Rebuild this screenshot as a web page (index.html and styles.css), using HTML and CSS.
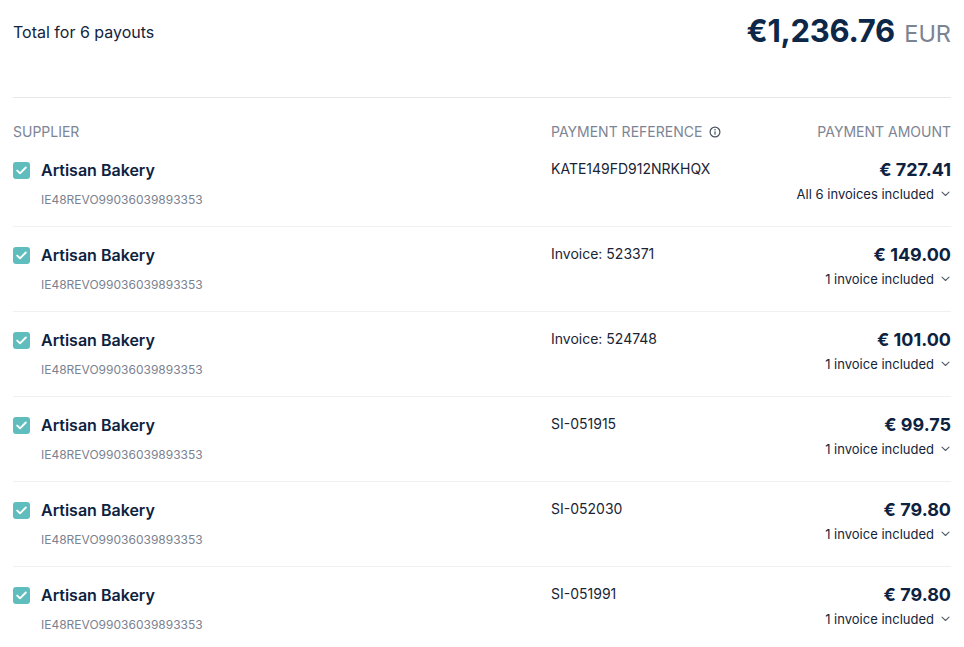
FILE: index.html
```html
<!DOCTYPE html>
<html>
<head>
<meta charset="utf-8">
<link rel="stylesheet" href="styles.css">
</head>
<body>
<div class="page">
  <div class="summary">
    <div class="summary-label">Total for 6 payouts</div>
    <div class="summary-total"><span class="total-amount">€1,236.76</span> <span class="total-cur">EUR</span></div>
  </div>
  <div class="table">
    <div class="thead">
      <div class="col-supplier">SUPPLIER</div>
      <div class="col-ref">PAYMENT REFERENCE
        <svg class="info" width="12" height="12" viewBox="0 0 12 12"><circle cx="6" cy="6" r="4.9" fill="none" stroke="#4a5260" stroke-width="1.2"/><circle cx="6" cy="3.7" r="0.8" fill="#4a5260"/><rect x="5.4" y="5.2" width="1.2" height="3.6" rx="0.5" fill="#4a5260"/></svg>
      </div>
      <div class="col-amount">PAYMENT AMOUNT</div>
    </div>

    <div class="row">
      <div class="col-supplier">
        <div class="name-line"><span class="check"><svg width="11" height="9" viewBox="0 0 11 9"><path d="M1.2 4.6 L4 7.3 L9.8 1.5" fill="none" stroke="#fff" stroke-width="1.9" stroke-linecap="round" stroke-linejoin="round"/></svg></span><span class="name">Artisan Bakery</span></div>
        <div class="iban">IE48REVO99036039893353</div>
      </div>
      <div class="col-ref ref">KATE149FD912NRKHQX</div>
      <div class="col-amount">
        <div class="amount">€ 727.41</div>
        <div class="included">All 6 invoices included <svg class="chev" width="9" height="6" viewBox="0 0 9 6"><path d="M1 1.2 L4.5 4.5 L8 1.2" fill="none" stroke="#555d6b" stroke-width="1.1" stroke-linecap="round" stroke-linejoin="round"/></svg></div>
      </div>
    </div>

    <div class="row">
      <div class="col-supplier">
        <div class="name-line"><span class="check"><svg width="11" height="9" viewBox="0 0 11 9"><path d="M1.2 4.6 L4 7.3 L9.8 1.5" fill="none" stroke="#fff" stroke-width="1.9" stroke-linecap="round" stroke-linejoin="round"/></svg></span><span class="name">Artisan Bakery</span></div>
        <div class="iban">IE48REVO99036039893353</div>
      </div>
      <div class="col-ref ref">Invoice: 523371</div>
      <div class="col-amount">
        <div class="amount">€ 149.00</div>
        <div class="included">1 invoice included <svg class="chev" width="9" height="6" viewBox="0 0 9 6"><path d="M1 1.2 L4.5 4.5 L8 1.2" fill="none" stroke="#555d6b" stroke-width="1.1" stroke-linecap="round" stroke-linejoin="round"/></svg></div>
      </div>
    </div>

    <div class="row">
      <div class="col-supplier">
        <div class="name-line"><span class="check"><svg width="11" height="9" viewBox="0 0 11 9"><path d="M1.2 4.6 L4 7.3 L9.8 1.5" fill="none" stroke="#fff" stroke-width="1.9" stroke-linecap="round" stroke-linejoin="round"/></svg></span><span class="name">Artisan Bakery</span></div>
        <div class="iban">IE48REVO99036039893353</div>
      </div>
      <div class="col-ref ref">Invoice: 524748</div>
      <div class="col-amount">
        <div class="amount">€ 101.00</div>
        <div class="included">1 invoice included <svg class="chev" width="9" height="6" viewBox="0 0 9 6"><path d="M1 1.2 L4.5 4.5 L8 1.2" fill="none" stroke="#555d6b" stroke-width="1.1" stroke-linecap="round" stroke-linejoin="round"/></svg></div>
      </div>
    </div>

    <div class="row">
      <div class="col-supplier">
        <div class="name-line"><span class="check"><svg width="11" height="9" viewBox="0 0 11 9"><path d="M1.2 4.6 L4 7.3 L9.8 1.5" fill="none" stroke="#fff" stroke-width="1.9" stroke-linecap="round" stroke-linejoin="round"/></svg></span><span class="name">Artisan Bakery</span></div>
        <div class="iban">IE48REVO99036039893353</div>
      </div>
      <div class="col-ref ref">SI-051915</div>
      <div class="col-amount">
        <div class="amount">€ 99.75</div>
        <div class="included">1 invoice included <svg class="chev" width="9" height="6" viewBox="0 0 9 6"><path d="M1 1.2 L4.5 4.5 L8 1.2" fill="none" stroke="#555d6b" stroke-width="1.1" stroke-linecap="round" stroke-linejoin="round"/></svg></div>
      </div>
    </div>

    <div class="row">
      <div class="col-supplier">
        <div class="name-line"><span class="check"><svg width="11" height="9" viewBox="0 0 11 9"><path d="M1.2 4.6 L4 7.3 L9.8 1.5" fill="none" stroke="#fff" stroke-width="1.9" stroke-linecap="round" stroke-linejoin="round"/></svg></span><span class="name">Artisan Bakery</span></div>
        <div class="iban">IE48REVO99036039893353</div>
      </div>
      <div class="col-ref ref">SI-052030</div>
      <div class="col-amount">
        <div class="amount">€ 79.80</div>
        <div class="included">1 invoice included <svg class="chev" width="9" height="6" viewBox="0 0 9 6"><path d="M1 1.2 L4.5 4.5 L8 1.2" fill="none" stroke="#555d6b" stroke-width="1.1" stroke-linecap="round" stroke-linejoin="round"/></svg></div>
      </div>
    </div>

    <div class="row last">
      <div class="col-supplier">
        <div class="name-line"><span class="check"><svg width="11" height="9" viewBox="0 0 11 9"><path d="M1.2 4.6 L4 7.3 L9.8 1.5" fill="none" stroke="#fff" stroke-width="1.9" stroke-linecap="round" stroke-linejoin="round"/></svg></span><span class="name">Artisan Bakery</span></div>
        <div class="iban">IE48REVO99036039893353</div>
      </div>
      <div class="col-ref ref">SI-051991</div>
      <div class="col-amount">
        <div class="amount">€ 79.80</div>
        <div class="included">1 invoice included <svg class="chev" width="9" height="6" viewBox="0 0 9 6"><path d="M1 1.2 L4.5 4.5 L8 1.2" fill="none" stroke="#555d6b" stroke-width="1.1" stroke-linecap="round" stroke-linejoin="round"/></svg></div>
      </div>
    </div>
  </div>
</div>
</body>
</html>
```

FILE: styles.css
```css
* { box-sizing: border-box; }
html, body { margin: 0; padding: 0; background: #fff; }
body {
  font-family: Inter, "Noto Sans", sans-serif;
  color: #13243b;
  -webkit-font-smoothing: antialiased;
}
.page { padding: 0 13px; }

.summary {
  height: 98px;
  border-bottom: 1px solid #e6e8eb;
  display: flex;
  justify-content: space-between;
  align-items: flex-start;
  padding-top: 11px;
}
.summary-label {
  font-size: 16px;
  line-height: 42px;
  color: #13243b;
}
.summary-total {
  line-height: 40px;
  white-space: nowrap;
}
.total-amount {
  font-size: 31px;
  font-weight: 700;
  color: #0c2748;
  letter-spacing: -0.3px;
}
.total-cur {
  font-size: 23.5px;
  color: #7b8493;
  margin-left: 5px;
}

.thead, .row {
  display: grid;
  grid-template-columns: 538px 1fr auto;
  align-items: start;
}
.thead {
  padding-top: 25px;
  height: 44px;
  font-size: 14px;
  line-height: 18px;
  color: #7d8594;
}
.thead .col-ref { display: flex; align-items: center; gap: 7px; height: 18px; }
.info { display: block; }
.thead .col-amount { text-align: right; }

.row {
  height: 85px;
  padding-top: 17px;
  border-bottom: 1px solid #eef0f2;
}
.row.last { border-bottom: none; }

.name-line {
  display: flex;
  align-items: center;
  height: 22px;
}
.check {
  width: 17px;
  height: 17px;
  border-radius: 3px;
  background: #5fbdbe;
  display: inline-flex;
  align-items: center;
  justify-content: center;
  margin-right: 11px;
}
.check svg { display: block; }
.name {
  font-size: 16px;
  font-weight: 600;
  color: #0d2240;
}
.iban {
  margin-top: 11px;
  margin-left: 28px;
  font-size: 12px;
  line-height: 16px;
  color: #7b8290;
}
.ref {
  font-size: 14px;
  line-height: 20px;
  color: #1a2435;
}
.col-amount { text-align: right; }
.amount {
  font-size: 18px;
  font-weight: 700;
  line-height: 22px;
  color: #0d2240;
}
.included {
  margin-top: 4px;
  font-size: 13px;
  line-height: 18px;
  color: #13243b;
  display: flex;
  align-items: center;
  justify-content: flex-end;
  gap: 7px;
}
.chev { display: block; margin-right: 1px; }
```
